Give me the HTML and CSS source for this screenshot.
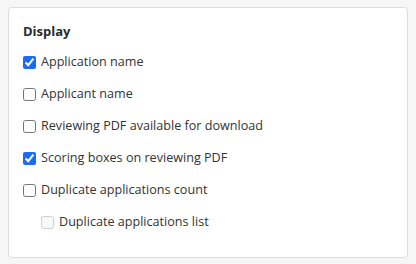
FILE: index.html
```html
<!DOCTYPE html>
<html lang="en">
<head>
  <meta charset="utf-8">
  <title>Display settings</title>
  <link rel="stylesheet" href="styles.css">
</head>
<body>
  <section class="panel">
    <h3 class="panel-title">Display</h3>
    <label class="option">
      <input class="checkbox" type="checkbox" checked>
      <span>Application name</span>
    </label>
    <label class="option">
      <input class="checkbox" type="checkbox">
      <span>Applicant name</span>
    </label>
    <label class="option">
      <input class="checkbox" type="checkbox">
      <span>Reviewing PDF available for download</span>
    </label>
    <label class="option">
      <input class="checkbox" type="checkbox" checked>
      <span>Scoring boxes on reviewing PDF</span>
    </label>
    <label class="option">
      <input class="checkbox" type="checkbox">
      <span>Duplicate applications count</span>
    </label>
    <label class="option option-nested">
      <input class="checkbox" type="checkbox" disabled>
      <span>Duplicate applications list</span>
    </label>
  </section>
</body>
</html>
```

FILE: styles.css
```css
*, *::before, *::after {
  box-sizing: border-box;
}

body {
  margin: 0;
  padding: 7px 8px;
  background-color: #f6f6f6;
  color: #333333;
  font-family: "Open Sans", sans-serif;
  font-size: 12.6px;
}

.panel {
  height: 251px;
  border: 1px solid #dcdcdc;
  border-radius: 4px;
  padding: 13px 14px 19px;
  background-color: #ffffff;
}

.panel-title {
  margin: 0 0 5px;
  font-size: 13px;
  font-weight: 700;
  line-height: 20px;
  color: #2b2b2b;
}

.option {
  display: flex;
  align-items: center;
  gap: 5px;
  height: 32px;
  line-height: 1;
}

.option-nested {
  padding-left: 18px;
}

.checkbox {
  width: 13px;
  height: 13px;
  margin: 0;
  accent-color: #1a6cf0;
}
```
